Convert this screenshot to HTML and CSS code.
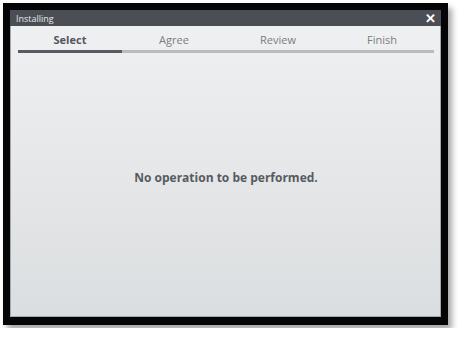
FILE: index.html
```html
<!DOCTYPE html>
<html lang="en">
<head>
    <meta charset="UTF-8">
    <title>Installing</title>
    <link rel="stylesheet" href="styles.css">
</head>
<body>
    <div class="window">
        <div class="titlebar">
            <span class="title">Installing</span>
            <span class="close">&#x2715;</span>
        </div>
        <div class="content">
            <div class="tabs">
                <div class="tab active">Select</div>
                <div class="tab">Agree</div>
                <div class="tab">Review</div>
                <div class="tab">Finish</div>
            </div>
            <div class="message">No operation to be performed.</div>
        </div>
    </div>
</body>
</html>
```

FILE: styles.css
```css
body {
    margin: 0;
    padding: 3px;
    background-color: #ffffff;
    font-family: "Open Sans", "Noto Sans", sans-serif;
}

.window {
    width: 431px;
    height: 307px;
    border: 7px solid #050505;
    border-bottom-width: 8px;
    display: flex;
    flex-direction: column;
    box-shadow: 4px 5px 6px rgba(0, 0, 0, 0.35);
}

.titlebar {
    height: 16px;
    background-color: #4b4e54;
    display: flex;
    align-items: center;
    justify-content: space-between;
    padding: 0 5px 0 6px;
    color: #ffffff;
}

.title {
    font-size: 9px;
    color: #e8e9ea;
}

.close {
    font-size: 13px;
    font-weight: bold;
    line-height: 16px;
}

.content {
    flex: 1;
    display: flex;
    flex-direction: column;
    padding: 0 6px 0 7px;
    border: 1px solid #a4a7ab;
    border-top: none;
    background: linear-gradient(#eff0f1, #dbdee0);
}

.tabs {
    display: flex;
    margin-top: 6px;
}

.tab {
    flex: 1;
    text-align: center;
    font-size: 11px;
    color: #7a7d82;
    padding-bottom: 3px;
    border-bottom: 3px solid #b9bbbe;
}

.tab.active {
    font-weight: bold;
    color: #54585e;
    border-bottom-color: #575b61;
}

.message {
    flex: 1;
    display: flex;
    align-items: center;
    justify-content: center;
    padding-bottom: 14px;
    font-size: 12px;
    font-weight: bold;
    color: #575b61;
}
```
